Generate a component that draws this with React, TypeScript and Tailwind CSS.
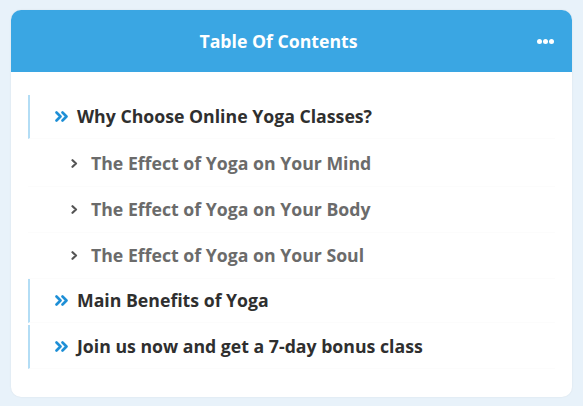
const items = [
  { title: "Why Choose Online Yoga Classes?", children: ["The Effect of Yoga on Your Mind", "The Effect of Yoga on Your Body", "The Effect of Yoga on Your Soul"] },
  { title: "Main Benefits of Yoga", children: [] },
  { title: "Join us now and get a 7-day bonus class", children: [] },
];

function DoubleAngle() {
  return (
    <svg width="13" height="11" viewBox="0 0 13 11" fill="none" stroke="#1e8fd6" strokeWidth="2.6" strokeLinecap="round" strokeLinejoin="round" className="mr-[9px] shrink-0">
      <path d="M1.5 1.5 L5.5 5.5 L1.5 9.5" />
      <path d="M7.5 1.5 L11.5 5.5 L7.5 9.5" />
    </svg>
  );
}

function Angle() {
  return (
    <svg width="7" height="9" viewBox="0 0 7 9" fill="none" stroke="#555" strokeWidth="2.2" strokeLinecap="round" strokeLinejoin="round" className="mr-[13px] shrink-0">
      <path d="M1.5 1.2 L5 4.5 L1.5 7.8" />
    </svg>
  );
}

export default function App() {
  return (
    <div className="min-h-[406px] bg-[#e8f2fa] px-[11px] pt-[10px] font-['Open_Sans',sans-serif]">
      <div className="w-[561px] overflow-hidden rounded-[10px] bg-white shadow-[0_0_2px_rgba(0,0,0,0.08)]">
        <div className="relative flex h-[62px] items-center justify-center bg-[#3aa6e3] pr-[26px]">
          <span className="text-[17.7px] font-bold text-white">Table Of Contents</span>
          <div className="absolute right-[18px] top-[29px] flex gap-[1px]">
            <span className="h-[5px] w-[5px] rounded-full bg-white" />
            <span className="h-[5px] w-[5px] rounded-full bg-white" />
            <span className="h-[5px] w-[5px] rounded-full bg-white" />
          </div>
        </div>
        <div className="px-[17px] pb-[26px] pt-[23px]">
          {items.map((item) => (
            <div key={item.title}>
              <div className="mb-[2px] flex h-[44px] items-center border-b border-[#fcfcfc] border-l-2 border-l-[#b3ddf5] pl-[25px]">
                <DoubleAngle />
                <span className="text-[17.7px] font-bold text-[#2f2f2f]">{item.title}</span>
              </div>
              {item.children.map((c) => (
                <div key={c} className="flex h-[46px] items-center border-b border-[#fcfcfc] pl-[43px]">
                  <Angle />
                  <span className="text-[17.7px] font-bold text-[#6b6b6b]">{c}</span>
                </div>
              ))}
            </div>
          ))}
        </div>
      </div>
    </div>
  );
}
